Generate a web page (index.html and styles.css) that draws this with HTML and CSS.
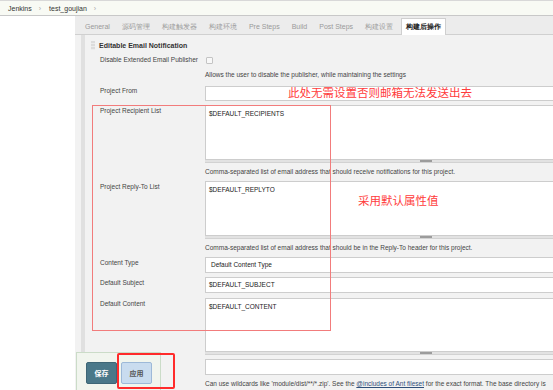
FILE: index.html
```html
<!doctype html>
<html>

<head>
<meta charset="utf-8">
<title>test_goujian Config [Jenkins]</title>
<link rel="stylesheet" href="styles.css">
</head>

<body>

<div class="crumbs">
  <a href="#">Jenkins</a><span class="sep">&#8250;</span>
  <a href="#">test_goujian</a><span class="sep">&#8250;</span>
</div>

<div class="page">
<div class="side"></div>

<div class="main">

<div class="tabs">
  <span class="tab">General</span>
  <span class="tab">源码管理</span>
  <span class="tab">构建触发器</span>
  <span class="tab">构建环境</span>
  <span class="tab">Pre Steps</span>
  <span class="tab">Build</span>
  <span class="tab">Post Steps</span>
  <span class="tab">构建设置</span>
  <span class="tab active">构建后操作</span>
</div>

<div class="section">
  <div class="sechead"><span class="grip"></span>Editable Email Notification</div>

  <div class="row first">
    <div class="lbl">Disable Extended Email Publisher</div>
    <div class="fld"><span class="chk"></span></div>
  </div>
  <div class="row helprow">
    <div></div>
    <div class="help">Allows the user to disable the publisher, while maintaining the settings</div>
  </div>

  <div class="row from">
    <div class="lbl">Project From</div>
    <div class="fld"><input class="txt" value=""></div>
  </div>

  <div class="row">
    <div class="lbl">Project Recipient List</div>
    <div class="fld">
      <textarea class="area">$DEFAULT_RECIPIENTS</textarea>
      <div class="handle"><span></span></div>
      <div class="help tall">Comma-separated list of email address that should receive notifications for this project.</div>
    </div>
  </div>

  <div class="row flush">
    <div class="lbl">Project Reply-To List</div>
    <div class="fld">
      <textarea class="area">$DEFAULT_REPLYTO</textarea>
      <div class="handle"><span></span></div>
      <div class="help tall">Comma-separated list of email address that should be in the Reply-To header for this project.</div>
    </div>
  </div>

  <div class="row flush">
    <div class="lbl">Content Type</div>
    <div class="fld"><div class="select">Default Content Type</div></div>
  </div>

  <div class="row">
    <div class="lbl">Default Subject</div>
    <div class="fld"><div class="txt">$DEFAULT_SUBJECT</div></div>
  </div>

  <div class="row content">
    <div class="lbl">Default Content</div>
    <div class="fld">
      <textarea class="area short">$DEFAULT_CONTENT</textarea>
      <div class="handle"><span></span></div>
    </div>
  </div>

  <div class="row">
    <div></div>
    <div class="fld">
      <input class="txt" value="">
      <div class="help tall">Can use wildcards like 'module/dist/**/*.zip'. See the <a href="#">@includes of Ant fileset</a> for the exact format. The base directory is</div>
    </div>
  </div>
</div>

</div>
</div>

<!-- annotations drawn over the screenshot -->
<div class="mark box1"></div>
<div class="note note1">此处无需设置否则邮箱无法发送出去</div>
<div class="note note2">采用默认属性值</div>

<div class="bottom">
  <button class="btn save">保存</button>
  <button class="btn apply">应用</button>
</div>
<div class="mark box2"></div>

</body>
</html>
```

FILE: styles.css
```css
body {
    margin: 0;
    width: 553px;
    height: 390px;
    overflow: hidden;
    position: relative;
    background: #fff;
    color: #333;
    font-family: "Liberation Sans", Arial, sans-serif;
    font-size: 6.5px;
}

.crumbs {
    height: 14px;
    display: flex;
    align-items: center;
    padding-left: 8px;
    background: #f8faf4;
    border-top: 1px solid #d8d8d8;
    border-bottom: 1px solid #c8c8c8;
    font-size: 7px;
}
.crumbs a {
    color: #333;
    text-decoration: none;
}
.crumbs .sep {
    color: #aaa;
    margin: 0 8px 0 7px;
}

.page {
    display: flex;
    height: 374px;
}
.side {
    width: 75px;
    flex: none;
    background: #fff;
}
.main {
    flex: 1;
    min-width: 0;
    overflow: hidden;
    background: #f2f2f2;
}

.tabs {
    height: 18px;
    display: flex;
    align-items: flex-end;
    padding-left: 4px;
    background: #ececec;
    border-bottom: 1px solid #d0d0d0;
    font-size: 7px;
    color: #9a9a9a;
    white-space: nowrap;
}
.tab {
    padding: 0 6px;
    height: 16px;
    line-height: 16px;
    box-sizing: border-box;
    margin-bottom: -1px;
}
.tab.active {
    padding: 0 4px;
    margin-left: 2px;
    background: #fff;
    border: 1px solid #cfcfcf;
    border-bottom: none;
    color: #222;
    font-weight: bold;
    line-height: 15px;
    height: 17px;
}

.section {
    margin-left: 6px;
    border-left: 4px solid #e0e0e0;
    padding-left: 15px;
    padding-top: 6px;
    height: 360px;
}
.sechead {
    margin-left: -9px;
    display: flex;
    align-items: center;
    height: 8px;
    font-size: 7px;
    font-weight: bold;
    color: #333;
}
.grip {
    width: 4px;
    height: 9px;
    margin-right: 4px;
    background: repeating-linear-gradient(#dcdcdc 0 2px, #ececec 2px 3px);
}

.row {
    display: grid;
    grid-template-columns: 105px 360px;
    margin-top: 4px;
}
.row.first {
    margin-top: 6px;
}
.row.helprow {
    margin-top: 5px;
}
.row.from {
    margin-top: 6px;
}
.row.flush {
    margin-top: 0;
}
.row.content {
    margin-top: 5px;
}
.lbl {
    padding-top: 2px;
    line-height: 8px;
    white-space: nowrap;
    color: #444;
}
.row.first .lbl {
    padding-top: 0;
    line-height: 10px;
}
.row.from .lbl {
    padding-top: 1px;
}

.fld {
    min-width: 0;
}
.chk {
    display: inline-block;
    margin: 2px 0 0 1px;
    width: 5px;
    height: 5px;
    border: 1px solid #c4c4c4;
    border-radius: 1px;
    background: #f8f8f8;
}

.help {
    line-height: 10px;
    color: #444;
    white-space: nowrap;
}
.help.tall {
    line-height: 18px;
}
.help a {
    color: #2f4f7a;
}

.txt, .area, .select {
    display: block;
    box-sizing: border-box;
    width: 360px;
    margin: 0;
    border: 1px solid #cdcdcd;
    background: #fff;
    color: #222;
    font: inherit;
    outline: none;
}
.txt {
    height: 16px;
    line-height: 14px;
    padding: 0 3px;
}
.row.from .txt {
    height: 15px;
}
.select {
    height: 16px;
    line-height: 14px;
    padding-left: 5px;
}
.area {
    height: 55px;
    padding: 3px 3px;
    line-height: 9px;
    resize: none;
    overflow: hidden;
}
.area.short {
    height: 54px;
}
.handle {
    height: 2px;
    background: #e2e2e2;
    border-bottom: 1px solid #d2d2d2;
}
.handle span {
    display: block;
    margin-left: 215px;
    width: 12px;
    height: 2px;
    background: #9c9c9c;
}

.mark {
    position: absolute;
    box-sizing: border-box;
}
.box1 {
    left: 92px;
    top: 105px;
    width: 239px;
    height: 226px;
    border: 1px solid #f27c7c;
}
.box2 {
    left: 117px;
    top: 353px;
    width: 58px;
    height: 36px;
    border: 2px solid #ff2b2b;
    border-radius: 2px;
}

.note {
    position: absolute;
    font-family: "Noto Sans CJK SC", sans-serif;
    font-size: 11.5px;
    line-height: 14px;
    color: #ff3b3b;
    white-space: nowrap;
}
.note1 {
    left: 288px;
    top: 85px;
}
.note2 {
    left: 358px;
    top: 193px;
}

.bottom {
    position: absolute;
    left: 76px;
    top: 352px;
    width: 85px;
    height: 40px;
    box-sizing: border-box;
    padding: 9px 0 0 9px;
    display: flex;
    gap: 4px;
    align-items: flex-start;
    background: #f1f5ee;
    border: 1px solid #cbdcc8;
}
.btn {
    width: 31px;
    height: 22px;
    padding: 0;
    border-radius: 2px;
    font-family: "Noto Sans CJK SC", sans-serif;
    font-size: 7px;
    font-weight: bold;
}
.btn.save {
    background: #4a7889;
    border: 1px solid #3e6676;
    color: #fff;
}
.btn.apply {
    background: #c9dcef;
    border: 1px solid #9db9d8;
    color: #555;
}
```
